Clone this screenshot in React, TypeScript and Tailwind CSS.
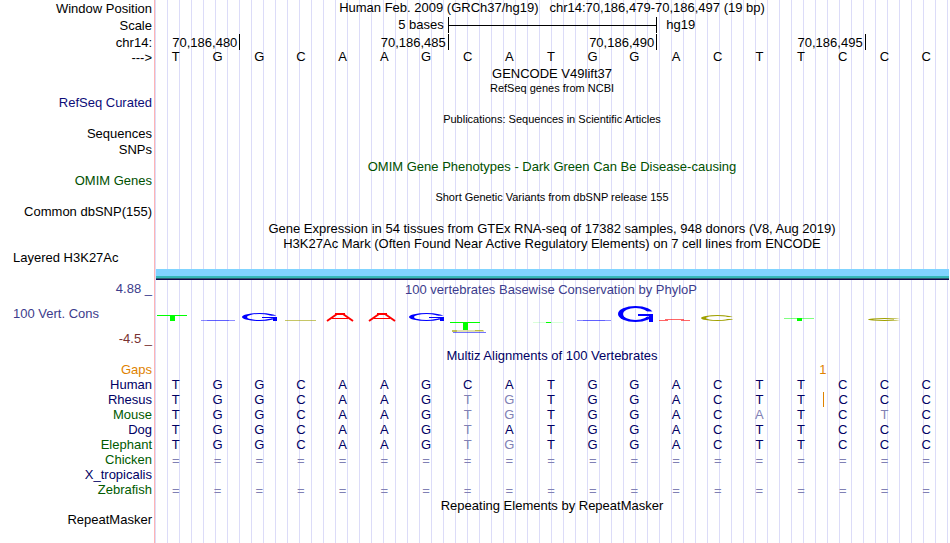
import { ReactNode, useId } from "react";

const SEQUENCE = "TGGCAAGCATGGACTTCCC";

type Species = {
  name: string;
  tone: "navy" | "green";
  bases: string;
  insertBefore?: number;
};

const SPECIES: Species[] = [
  { name: "Human", tone: "navy", bases: "TGGCAAGCATGGACTTCCC" },
  { name: "Rhesus", tone: "navy", bases: "TGGCAAGTGTGGACTTCCC", insertBefore: 16 },
  { name: "Mouse", tone: "green", bases: "TGGCAAGTGTGGACATCTC" },
  { name: "Dog", tone: "navy", bases: "TGGCAAGTATGGACTTCCC" },
  { name: "Elephant", tone: "green", bases: "TGGCAAGTGTGGACTTCCC" },
  { name: "Chicken", tone: "green", bases: "===================" },
  { name: "X_tropicalis", tone: "navy", bases: "                   " },
  { name: "Zebrafish", tone: "green", bases: "===================" },
];

const POSITIONS = ["70,186,480", "70,186,485", "70,186,490", "70,186,495"];

function Row({
  label,
  labelClass = "text-right",
  height = "h-[17px]",
  children,
}: {
  label?: string;
  labelClass?: string;
  height?: string;
  children?: ReactNode;
}) {
  return (
    <div className={`grid grid-cols-[156px_minmax(0,1fr)] ${height}`}>
      <div className={`pr-1 whitespace-nowrap ${labelClass}`}>{label}</div>
      <div className="min-w-0">{children}</div>
    </div>
  );
}

function Title({ children, className = "" }: { children: ReactNode; className?: string }) {
  return <h2 className={`pr-[2px] text-center whitespace-pre ${className}`}>{children}</h2>;
}

type Box = { x: number; y: number; w: number; h: number; color: string };

/** Open ring used for the C and G marks of the conservation logo. */
function Ring({ x, y, w, h, color, side, edge }: Box & { side: number; edge: number }) {
  const id = useId();
  const cx = x + w / 2;
  const cy = y + h / 2;
  return (
    <g>
      <mask id={id} maskUnits="userSpaceOnUse" x={x} y={y} width={w} height={h}>
        <rect x={x} y={y} width={w} height={h} fill="white" />
        <ellipse cx={cx} cy={cy} rx={w / 2 - side} ry={h / 2 - edge} fill="black" />
        <rect x={x + w - side - 2} y={y + h * 0.34} width={side + 2} height={h * 0.32} fill="black" />
      </mask>
      <ellipse cx={cx} cy={cy} rx={w / 2} ry={h / 2} fill={color} mask={`url(#${id})`} />
    </g>
  );
}

function GMark({ x, y, w, h, edge }: Omit<Box, "color"> & { edge: number }) {
  const mid = y + Math.floor(h / 2);
  return (
    <g fill="#0000ff">
      <Ring x={x} y={y} w={w} h={h} color="#0000ff" side={5} edge={edge} />
      <rect x={x + w - 15} y={mid} width={15} height={edge} />
      <rect x={x + w - 4} y={mid} width={4} height={y + h - mid} />
    </g>
  );
}

function AMark({ x, y, w, h }: Omit<Box, "color">) {
  return (
    <g stroke="#ff0000" fill="none">
      <line x1={x + 3} y1={y + h} x2={x + w / 2 - 3} y2={y + 1} strokeWidth={2} />
      <line x1={x + w - 3} y1={y + h} x2={x + w / 2 + 3} y2={y + 1} strokeWidth={2} />
      <line x1={x + w / 2 - 5} y1={y + 1} x2={x + w / 2 + 5} y2={y + 1} strokeWidth={2} />
      <line x1={x + 8} y1={y + h - 2.5} x2={x + w - 8} y2={y + h - 2.5} strokeWidth={1} />
    </g>
  );
}

function TMark({ x, y, h, faint = 1 }: { x: number; y: number; h: number; faint?: number }) {
  return (
    <g fill="#00ff00">
      <rect x={x} y={y} width={30} height={1} opacity={faint} />
      <rect x={x + 13} y={y} width={5} height={h} />
    </g>
  );
}

function ConservationLogo() {
  return (
    <svg
      viewBox="156 297 792 51"
      preserveAspectRatio="none"
      className="block h-[51px] w-full"
      role="img"
      aria-label="PhyloP conservation logo"
    >
      <TMark x={157} y={315} h={6} />
      <rect x={201} y={320} width={34} height={1} fill="#0000ff" opacity={0.45} />
      <rect x={207} y={320} width={22} height={1} fill="#0000ff" opacity={0.3} />
      <GMark x={242} y={313} w={35} h={8} edge={1} />
      <rect x={285} y={320} width={31} height={1} fill="#a0a000" opacity={0.6} />
      <AMark x={324} y={313} w={32} h={8} />
      <AMark x={366} y={313} w={32} h={8} />
      <GMark x={409} y={313} w={35} h={8} edge={1} />
      <TMark x={450} y={322} h={8} />
      <rect x={452} y={330} width={32} height={2} fill="#a0a000" opacity={0.3} />
      <rect x={452} y={330} width={5} height={2} fill="#a0a000" opacity={0.5} />
      <rect x={475} y={330} width={8} height={1} fill="#a0a000" opacity={0.6} />
      <rect x={453} y={332} width={33} height={1} fill="#0000ff" opacity={0.55} />
      <TMark x={533} y={322} h={1} faint={0.15} />
      <rect x={577} y={320} width={34} height={1} fill="#0000ff" opacity={0.45} />
      <rect x={583} y={320} width={22} height={1} fill="#0000ff" opacity={0.3} />
      <GMark x={618} y={306} w={35} h={16} edge={2} />
      <g stroke="#ff0000">
        <line x1={659} y1={320.5} x2={668} y2={320.5} opacity={0.6} />
        <line x1={665} y1={319.5} x2={684} y2={319.5} opacity={0.6} />
        <line x1={681} y1={320.5} x2={690} y2={320.5} opacity={0.6} />
      </g>
      <Ring x={701} y={315} w={33} h={6} color="#a0a000" side={5} edge={1} />
      <TMark x={784} y={318} h={3} faint={0.5} />
      <Ring x={868} y={318} w={33} h={3} color="#a0a000" side={5} edge={1} />
    </svg>
  );
}

function Alignments() {
  return (
    <table className="block" aria-label="Multiz alignments">
      <tbody className="block">
        <tr className="mr-[2px] grid h-[15px] grid-cols-[156px_repeat(19,minmax(0,1fr))]">
          <th scope="row" className="pr-1 text-right font-normal text-[#e08200]">Gaps</th>
          <td className="col-span-15 p-0" />
          <td className="col-span-2 p-0 text-center text-[#e08200]">1</td>
          <td className="col-span-2 p-0" />
        </tr>
        {SPECIES.map((s) => (
          <tr key={s.name} className="mr-[2px] grid h-[15px] grid-cols-[156px_repeat(19,minmax(0,1fr))]">
            <th
              scope="row"
              className={`pr-1 text-right font-normal ${s.tone === "navy" ? "text-[#000064]" : "text-[#005a00]"}`}
            >
              {s.name}
            </th>
            {s.bases.split("").map((base, i) => (
              <td
                key={i}
                className={`pl-0 pr-[2px] text-center ${
                  base === "=" ? "pt-px text-[#8080b4]" : base === SEQUENCE[i] ? "text-[#000064]" : "text-[#8080b4]"
                } ${s.insertBefore === i ? "border-l border-[#e08200]" : ""}`}
              >
                {base}
              </td>
            ))}
          </tr>
        ))}
      </tbody>
    </table>
  );
}

export default function App() {
  return (
    <main className="min-h-screen w-full overflow-hidden bg-white bg-[linear-gradient(to_right,white_154px,#ffb4b4_154px,#ffb4b4_155px,transparent_155px),repeating-linear-gradient(to_right,transparent_0px,transparent_11px,#dcdcf8_11px,#dcdcf8_12px)] font-['Liberation_Sans',Arial,sans-serif] text-[13px] leading-[15px] text-black">
      <Row label="Window Position" labelClass="pt-px text-right">
        <h1 className="pr-[2px] text-center whitespace-pre">
          {"Human Feb. 2009 (GRCh37/hg19)   chr14:70,186,479-70,186,497 (19 bp)"}
        </h1>
      </Row>
      <Row label="Scale" labelClass="pt-px text-right">
        <div className="mr-[2px] grid h-4 grid-cols-19">
          <div className="col-span-7 pr-1 text-right">5 bases</div>
          <div className="col-span-5 flex items-center border-l border-black">
            <div className="h-px w-full bg-black" />
          </div>
          <div className="col-span-7 border-l border-black pl-[9px]">hg19</div>
        </div>
      </Row>
      <Row label="chr14:" height="h-[15px]" labelClass="pt-px text-right">
        <div className="mr-[2px] grid h-[15px] grid-cols-19">
          {POSITIONS.map((p, i) => (
            <div
              key={p}
              className={`pt-px pr-[2px] text-right ${i === 0 ? "col-span-2" : "col-span-5 border-l border-black"}`}
            >
              {p}
            </div>
          ))}
          <div className="col-span-2 border-l border-black" />
        </div>
      </Row>
      <Row label="--->" labelClass="pt-px text-right">
        <div className="mr-[2px] grid grid-cols-19">
          {SEQUENCE.split("").map((base, i) => (
            <span key={i} className="pr-[2px] text-center">{base}</span>
          ))}
        </div>
      </Row>

      <Row height="h-[15px]"><Title>GENCODE V49lift37</Title></Row>
      <Row height="h-[14px]"><Title className="text-[11px] leading-[15px]">RefSeq genes from NCBI</Title></Row>
      <Row label="RefSeq Curated" labelClass="text-right text-[#0c0c78]" />
      <Row height="h-[14px]">
        <Title className="text-[11px] leading-[15px]">Publications: Sequences in Scientific Articles</Title>
      </Row>
      <Row label="Sequences" height="h-4" />
      <Row label="SNPs" />
      <Row height="h-[14px]">
        <Title className="text-[#005000]">OMIM Gene Phenotypes - Dark Green Can Be Disease-causing</Title>
      </Row>
      <Row label="OMIM Genes" labelClass="text-right text-[#005000]" />
      <Row height="h-[14px]">
        <Title className="text-[11px] leading-[15px]">Short Genetic Variants from dbSNP release 155</Title>
      </Row>
      <Row label="Common dbSNP(155)" />
      <Row height="h-[15px]">
        <Title>Gene Expression in 54 tissues from GTEx RNA-seq of 17382 samples, 948 donors (V8, Aug 2019)</Title>
      </Row>
      <Row height="h-[14px]">
        <Title>H3K27Ac Mark (Often Found Near Active Regulatory Elements) on 7 cell lines from ENCODE</Title>
      </Row>
      <Row label="Layered H3K27Ac" labelClass="pl-[13px]" height="h-[19px]" />
      <Row height="h-[11px]">
        <div className="mr-px">
          <div className="h-[7px] bg-[#80d4ff]" />
          <div className="h-[2px] bg-[#34b8b8]" />
          <div className="h-px bg-[#2c6070]" />
          <div className="h-px bg-[#100850]" />
        </div>
      </Row>

      <section className="grid h-[68px] grid-cols-[156px_minmax(0,1fr)]">
        <div className="flex flex-col justify-between pt-px pb-[2px] text-[#3c3c8c]">
          <div className="pr-1 text-right">4.88 _</div>
          <div className="pl-[13px]">100 Vert. Cons</div>
          <div className="pr-1 text-right text-[#783232]">-4.5 _</div>
        </div>
        <div className="mr-[2px] pt-[2px]">
          <Title className="text-[#3c3c8c]">100 vertebrates Basewise Conservation by PhyloP</Title>
          <ConservationLogo />
        </div>
      </section>

      <Row height="h-[14px]"><Title className="text-[#000064]">Multiz Alignments of 100 Vertebrates</Title></Row>
      <Alignments />
      <Row height="h-[15px]"><Title className="pt-px">Repeating Elements by RepeatMasker</Title></Row>
      <Row label="RepeatMasker" height="h-[31px]" />
    </main>
  );
}
